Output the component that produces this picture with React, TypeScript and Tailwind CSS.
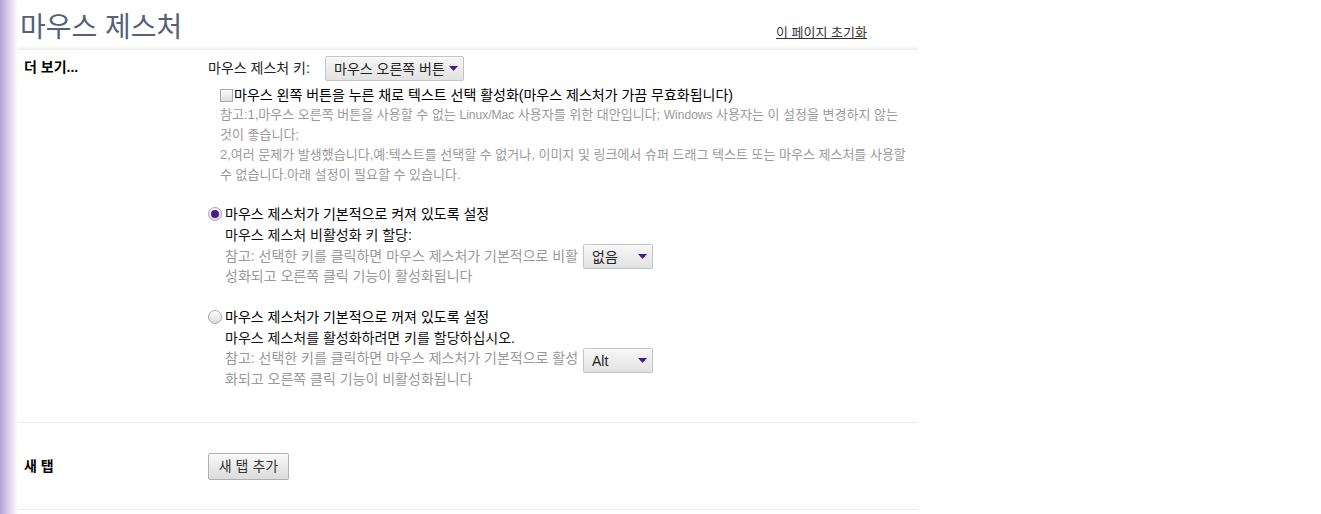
import React from "react";

const FONT = { fontFamily: '"Liberation Sans", "Noto Sans CJK KR", Arial, sans-serif' };

function Caret() {
  return (
    <svg width="9" height="5" viewBox="0 0 9 5" className="shrink-0">
      <path d="M0 0 L9 0 L4.5 5 Z" fill="#4b1c7e" />
    </svg>
  );
}

function Dropdown({ label, width }: { label: string; width: string }) {
  return (
    <div
      className={`${width} h-[25px] flex items-center justify-between pl-[8px] pr-[5px] border border-[#c4c4c4] rounded-[2px] bg-gradient-to-b from-[#f7f7f7] to-[#e2e2e2] text-[14px] text-[#222] whitespace-nowrap shadow-[inset_0_1px_0_#fff]`}
    >
      <span className="leading-none">{label}</span>
      <Caret />
    </div>
  );
}

function Radio({ checked }: { checked?: boolean }) {
  return (
    <span className="w-[14px] h-[14px] rounded-full border border-[#a9a9a9] bg-gradient-to-b from-[#fdfdfd] to-[#dcdcdc] flex items-center justify-center shrink-0 mr-[3px]">
      {checked && <span className="w-[8px] h-[8px] rounded-full bg-[#4a1b8a]" />}
    </span>
  );
}

export default function App() {
  return (
    <div className="flex min-h-[514px] bg-white text-black" style={FONT}>
      {/* 왼쪽 보라색 띠 */}
      <div className="w-[18px] shrink-0 bg-gradient-to-r from-[#b49fd4] via-[#dcd1ec] to-white" />

      <div className="w-[900px] shrink-0">
        {/* 헤더 */}
        <header className="h-[50px] relative flex items-start justify-between">
          <h1 className="pl-[2px] pt-[12px] text-[28px] leading-[32px] font-normal text-[#556079]">마우스 제스처</h1>
          <a href="#" className="mt-[25px] mr-[51px] text-[13px] leading-[16px] text-[#333] underline">
            이 페이지 초기화
          </a>
          <div className="absolute left-0 right-0 bottom-0 h-[4px] bg-gradient-to-b from-white to-[#ebebeb]" />
        </header>

        {/* 더 보기 */}
        <section className="flex border-b border-[#ececec] pb-[32px]">
          <div className="w-[190px] shrink-0 pl-[6px] pt-[7px] text-[14px] leading-[20px] font-bold">더 보기...</div>
          <div className="flex-1 pt-[6px]">
            <div className="flex items-center h-[25px]">
              <span className="text-[14px] text-[#222] w-[117px]">마우스 제스처 키:</span>
              <Dropdown label="마우스 오른쪽 버튼" width="w-[139px]" />
            </div>

            <label className="flex items-center mt-[4px] pl-[12px] h-[20px] text-[14px]">
              <span className="w-[13px] h-[13px] border border-[#a9a9a9] bg-gradient-to-b from-[#fbfbfb] to-[#dedede] shrink-0 mr-[1px]" />
              마우스 왼쪽 버튼을 누른 채로 텍스트 선택 활성화(마우스 제스처가 가끔 무효화됩니다)
            </label>

            <div className="pl-[12px] text-[13px] leading-[20px] text-[#9a9a9a] whitespace-nowrap">
              <div>
                참고:1,마우스 오른쪽 버튼을 사용할 수 없는 <span className="text-[12px]">Linux/Mac</span> 사용자를 위한 대안입니다;{" "}
                <span className="text-[12px]">Windows</span> 사용자는 이 설정을 변경하지 않는
              </div>
              <div>것이 좋습니다;</div>
              <div>2,여러 문제가 발생했습니다,예:텍스트를 선택할 수 없거나, 이미지 및 링크에서 슈퍼 드래그 텍스트 또는 마우스 제스처를 사용할</div>
              <div>수 없습니다.아래 설정이 필요할 수 있습니다.</div>
            </div>

            {/* 켜짐 */}
            <div className="mt-[18px]">
              <label className="flex items-center h-[22px] text-[14px]">
                <Radio checked />
                마우스 제스처가 기본적으로 켜져 있도록 설정
              </label>
              <div className="pl-[17px]">
                <div className="text-[14px] leading-[21px] text-[#111]">마우스 제스처 비활성화 키 할당:</div>
                <div className="flex items-start">
                  <div className="w-[358px] text-[14px] leading-[20px] text-[#999] whitespace-nowrap">
                    <div>참고: 선택한 키를 클릭하면 마우스 제스처가 기본적으로 비활</div>
                    <div>성화되고 오른쪽 클릭 기능이 활성화됩니다</div>
                  </div>
                  <div className="-mt-[2px]">
                    <Dropdown label="없음" width="w-[70px]" />
                  </div>
                </div>
              </div>
            </div>

            {/* 꺼짐 */}
            <div className="mt-[20px]">
              <label className="flex items-center h-[22px] text-[14px]">
                <Radio />
                마우스 제스처가 기본적으로 꺼져 있도록 설정
              </label>
              <div className="pl-[17px]">
                <div className="text-[14px] leading-[20px] text-[#111]">마우스 제스처를 활성화하려면 키를 할당하십시오.</div>
                <div className="flex items-start">
                  <div className="w-[358px] text-[14px] leading-[21px] text-[#999] whitespace-nowrap">
                    <div>참고: 선택한 키를 클릭하면 마우스 제스처가 기본적으로 활성</div>
                    <div>화되고 오른쪽 클릭 기능이 비활성화됩니다</div>
                  </div>
                  <div>
                    <Dropdown label="Alt" width="w-[70px]" />
                  </div>
                </div>
              </div>
            </div>
          </div>
        </section>

        {/* 새 탭 */}
        <section className="flex border-b border-[#ececec] pt-[30px] pb-[29px]">
          <div className="w-[190px] shrink-0 pl-[6px] pt-[3px] text-[14px] leading-[20px] font-bold">새 탭</div>
          <div className="flex-1">
            <button className="w-[81px] h-[27px] border border-[#b0b0b0] rounded-[2px] bg-gradient-to-b from-[#f8f8f8] to-[#dcdcdc] text-[14px] text-[#333] shadow-[inset_0_1px_0_#fff]">
              새 탭 추가
            </button>
          </div>
        </section>
      </div>
    </div>
  );
}
